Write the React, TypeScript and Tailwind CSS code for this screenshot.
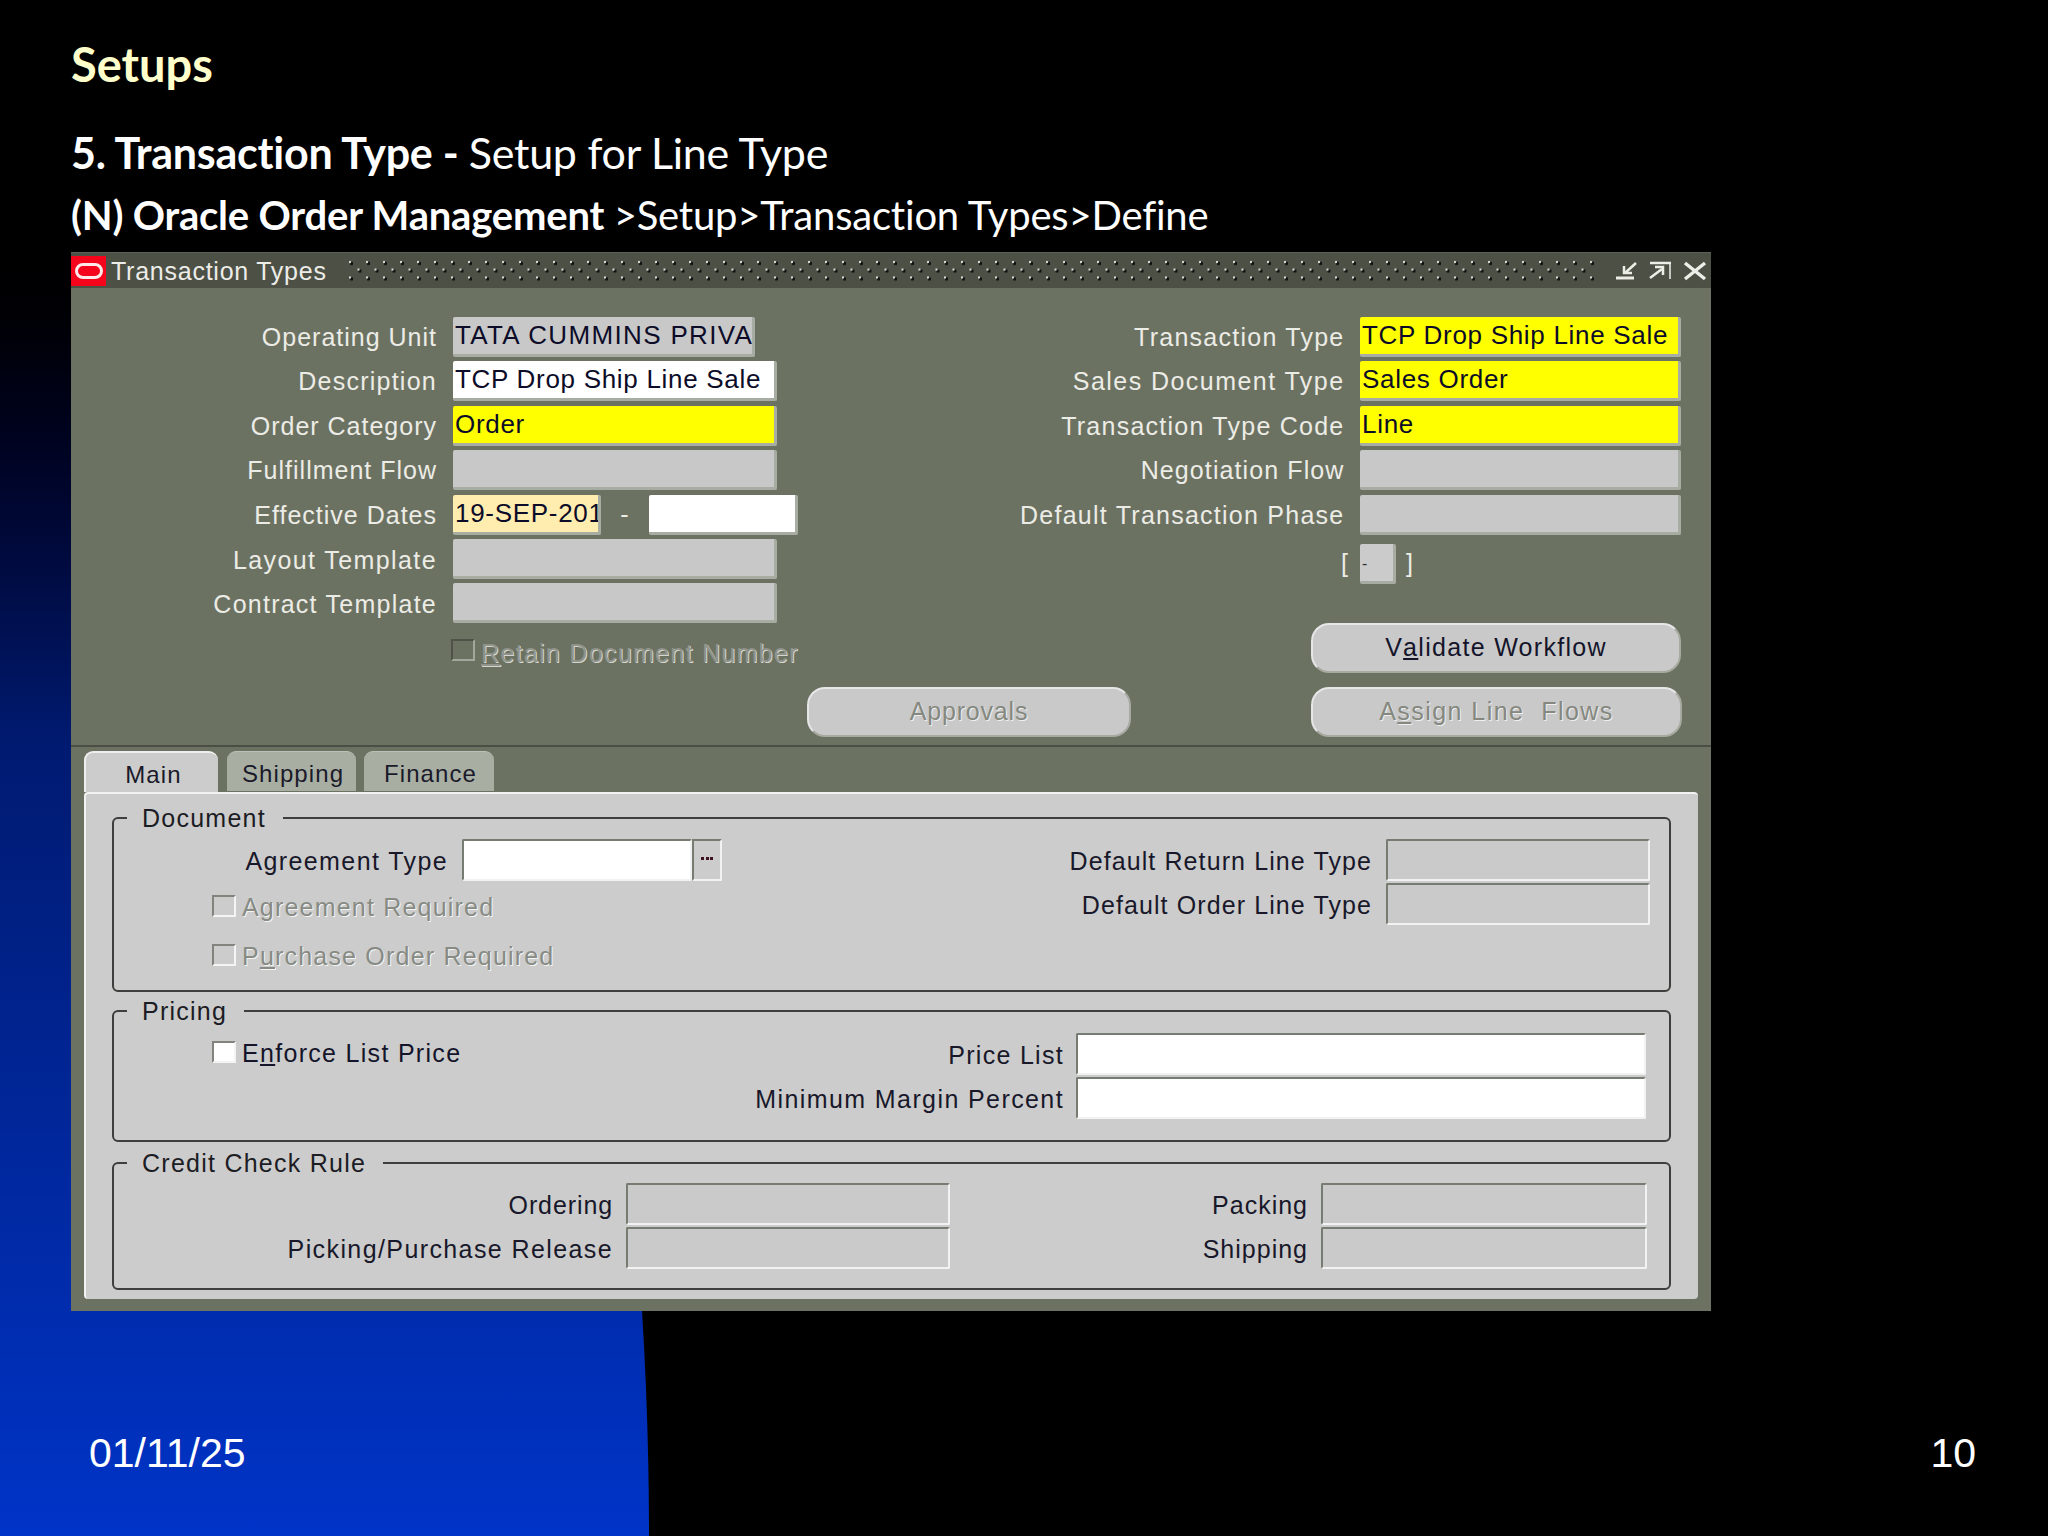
import React from "react";

const sans = "font-['Liberation_Sans',Arial,sans-serif]";

function Field({ w, tone = "gray", children }: { w: number; tone?: "gray" | "white" | "yellow" | "date"; children?: React.ReactNode }) {
  const bg = { gray: "bg-[#c8c8c8]", white: "bg-white", yellow: "bg-[#ffff00]", date: "bg-[#ffedb0]" }[tone];
  return (
    <div style={{ width: w }} className={`h-[40px] shrink-0 ${bg} border-r-[3px] border-b-[3px] border-[#a8ada3] rounded-[2px] pl-[2px] text-[26px] leading-[36px] tracking-[0.7px] text-[#0c0c28] overflow-hidden whitespace-nowrap`}>
      {children}
    </div>
  );
}

function Sunken({ w, tone = "gray" }: { w: number; tone?: "gray" | "white" }) {
  return (
    <div style={{ width: w }} className={`h-[42px] shrink-0 ${tone === "white" ? "bg-white" : "bg-[#cacaca]"} border-t-2 border-l-2 border-[#777c72] border-r-2 border-b-2 border-r-[#f2f2f2] border-b-[#f2f2f2] rounded-[2px]`} />
  );
}

function Row({ label, children, labelW = 366, gap = 16, labelClass = "tracking-[1.25px] leading-[41px]" }: { label: string; children: React.ReactNode; labelW?: number; gap?: number; labelClass?: string }) {
  return (
    <div className="flex items-start h-[44.4px]" style={{ gap }}>
      <div style={{ width: labelW }} className={`shrink-0 text-right text-[25px] text-[#ecece6] whitespace-nowrap ${labelClass}`}>{label}</div>
      {children}
    </div>
  );
}

function Pill({ w, disabled, tracking, children }: { w: number; disabled?: boolean; tracking: number; children: React.ReactNode }) {
  return (
    <div style={{ width: w, letterSpacing: tracking }} className={`h-[50px] rounded-[18px] bg-[#c9c9c9] border-t-2 border-l-2 border-[#e6e6e6] border-r-2 border-b-2 border-r-[#a6aaa0] border-b-[#a6aaa0] flex items-center justify-center text-[25px] ${disabled ? "text-[#85887f] [text-shadow:1px_1px_0_#eeeeee]" : "text-[#14142a]"}`}>
      {children}
    </div>
  );
}

function Check({ white, dark }: { white?: boolean; dark?: boolean }) {
  return <div className={`w-[24px] h-[22px] shrink-0 -mt-[5px] border-t-2 border-l-2 ${dark ? "border-[#4e5249] border-r-[#a3a89d] border-b-[#a3a89d]" : "border-[#80847c] border-r-[#f4f4f4] border-b-[#f4f4f4]"} ${white ? "bg-white" : "bg-transparent"} border-r-2 border-b-2`} />;
}

function Group({ legend, children, h, className = "" }: { legend: string; children: React.ReactNode; h: number; className?: string }) {
  return (
    <div style={{ height: h }} className={`relative border-2 border-[#3d3f3c] rounded-[6px] ${className}`}>
      <div className="absolute left-[13px] top-[-17px] h-[32px] pl-[15px] pr-[17px] bg-[#cccccc] text-[25px] leading-[32px] tracking-[1.25px] text-[#1c1c24]">{legend}</div>
      {children}
    </div>
  );
}

function Tab({ w, active, ml = 0, children }: { w: number; active?: boolean; ml?: number; children: React.ReactNode }) {
  return (
    <div style={{ width: w, marginLeft: ml }} className={`rounded-t-[9px] flex items-center justify-center pt-[4px] pl-[3px] text-[24px] tracking-[1.1px] text-[#1a1a2a] ${active ? "h-[41px] bg-[#cccccc] border-t-2 border-l-2 border-[#eeeeee]" : "h-[40px] bg-[#a9aea3] border-t border-[#bcc0b6]"}`}>
      {children}
    </div>
  );
}

function DotBar() {
  return (
    <svg className="flex-1 h-[24px] ml-[21px] mr-[14px]" preserveAspectRatio="none">
      <defs>
        <pattern id="dots" x="0" y="0" width="17" height="15.5" patternUnits="userSpaceOnUse">
          <rect x="2" y="3" width="3" height="3" fill="#111" />
          <rect x="1" y="2" width="2" height="2" fill="#e0e0d8" />
          <rect x="10.5" y="10.5" width="3" height="3" fill="#111" />
          <rect x="9.5" y="9.5" width="2" height="2" fill="#e0e0d8" />
        </pattern>
      </defs>
      <rect width="100%" height="100%" fill="url(#dots)" />
    </svg>
  );
}

const lower = "text-right text-[25px] leading-[44px] text-[#18182a] whitespace-nowrap";

export default function App() {
  return (
    <div className="relative w-[2048px] h-[1536px] bg-black overflow-hidden">
      <div className="absolute left-0 top-0 w-[649px] h-[1536px] rounded-tr-[649px_1536px] bg-gradient-to-b from-black from-[13%] via-[#001a70] via-[48%] to-[#0034c8]" />

      <div className="relative pl-[71px]">
        <div className="h-[131px] pt-[36px] font-['Lato',sans-serif]">
          <div className="text-[#ffffcc] font-bold text-[47px] leading-[56px]">Setups</div>
        </div>
        <div className="h-[62px] font-['Lato',sans-serif] text-white text-[43px] leading-[44px] tracking-[-0.25px]">
          <b>5. Transaction Type - </b>Setup for Line Type
        </div>
        <div className="h-[59px] font-['Lato',sans-serif] text-white text-[40px] leading-[44px] tracking-[-0.2px]">
          <b>(N) Oracle Order Management </b>&gt;Setup&gt;Transaction Types&gt;Define
        </div>

        <div className={`w-[1640px] h-[1059px] bg-[#6c7262] ${sans}`}>
          <div className="h-[36px] flex items-center bg-[#4c5045] border-t border-[#5c6055]">
            <div className="w-[35px] h-[30px] bg-[#f4051c] flex items-center justify-center">
              <div className="w-[28px] h-[16px] rounded-full border-[3px] border-[#ffe8e8]" />
            </div>
            <div className="ml-[5px] text-[25px] leading-[34px] tracking-[0.75px] text-[#ecece8] whitespace-nowrap">Transaction Types</div>
            <DotBar />
            <svg width="101" height="35" viewBox="0 0 101 35" className="shrink-0" fill="none" stroke="#eeeee8">
              <path d="M6 25h18" strokeWidth="3" />
              <path d="M26 10 15 20" strokeWidth="2.5" />
              <path d="M14 13v7h8" strokeWidth="2.5" />
              <path d="M40 10h21" strokeWidth="2.5" />
              <path d="M60 10v16" strokeWidth="1.5" />
              <path d="M40 25 52 16" strokeWidth="2.5" />
              <path d="M45 14h8v8" strokeWidth="2.5" />
              <path d="M75 10l20 16M95 10 75 26" strokeWidth="3.5" />
            </svg>
          </div>

          <div className="h-[459px] pt-[29px] border-b-2 border-[#4a4f45]">
            <div className="flex">
              <div className="w-[800px] shrink-0">
                <Row label="Operating Unit" labelClass="tracking-[1px] leading-[41px]"><Field w={302}><span className="tracking-[1.35px]">TATA CUMMINS PRIVA</span></Field></Row>
                <Row label="Description"><Field w={324} tone="white">TCP Drop Ship Line Sale</Field></Row>
                <Row label="Order Category" labelClass="tracking-[1px] leading-[41px]"><Field w={324} tone="yellow">Order</Field></Row>
                <Row label="Fulfillment Flow" labelClass="tracking-[1px] leading-[41px]"><Field w={324} /></Row>
                <Row label="Effective Dates" labelClass="tracking-[1px] leading-[41px]">
                  <Field w={148} tone="date">19-SEP-201</Field>
                  <div className="w-[31px] text-center -ml-[16px] pl-[16px] text-[25px] leading-[38px] text-[#ecece6]">-</div>
                  <div className="ml-[-15px] pl-[16px]"><Field w={149} tone="white" /></div>
                </Row>
                <Row label="Layout Template" labelClass="tracking-[1.4px] leading-[43px]"><Field w={324} /></Row>
                <Row label="Contract Template" labelClass="tracking-[1.25px] leading-[43px]"><Field w={324} /></Row>
                <div className="flex items-center gap-[6px] mt-[13px] ml-[380px] h-[24px]">
                  <Check dark />
                  <span className="mt-[2px] text-[25px] tracking-[1.3px] text-[#8f938a] [text-shadow:1px_1px_0_#d6d6d0] whitespace-nowrap"><u>R</u>etain Document Number</span>
                </div>
              </div>
              <div className="flex-1 min-w-0">
                <Row label="Transaction Type" labelW={473.5} gap={15.5}><Field w={321} tone="yellow">TCP Drop Ship Line Sale</Field></Row>
                <Row label="Sales Document Type" labelW={473.5} gap={15.5} labelClass="tracking-[1.45px] leading-[41px]"><Field w={321} tone="yellow">Sales Order</Field></Row>
                <Row label="Transaction Type Code" labelW={473.5} gap={15.5}><Field w={321} tone="yellow">Line</Field></Row>
                <Row label="Negotiation Flow" labelW={473.5} gap={15.5} labelClass="tracking-[1.1px] leading-[41px]"><Field w={321} /></Row>
                <Row label="Default Transaction Phase" labelW={473.5} gap={15.5}><Field w={321} /></Row>
                <div className="flex items-center h-[40px] ml-[470px] mt-[5px] text-[#ecece6] text-[25px]">
                  <span className="w-[19px]">[</span>
                  <div className="w-[36px] h-[40px] bg-[#cbcbcb] border-r-[3px] border-b-[3px] border-[#a8ada3] rounded-[2px] pl-[2px] text-[16px] leading-[40px] text-[#333]">-</div>
                  <span className="ml-[10px]">]</span>
                </div>
                <div className="mt-[39px] ml-[440px]"><Pill w={370} tracking={1.3}>V<u>a</u>lidate Workflow</Pill></div>
              </div>
            </div>
            <div className="flex mt-[14px]">
              <div className="ml-[736px]"><Pill w={324} disabled tracking={0.8}>Approvals</Pill></div>
              <div className="ml-[180px]"><Pill w={371} disabled tracking={1.45}>A<u>s</u>sign Line&nbsp; Flows</Pill></div>
            </div>
          </div>

          <div className="flex pl-[13px] pt-[4px]">
            <Tab w={134} active>Main</Tab>
            <Tab w={129} ml={9}>Shipping</Tab>
            <Tab w={130} ml={8}>Finance</Tab>
          </div>
          <div className="ml-[13px] w-[1614px] h-[507px] bg-[#cccccc] border-t-2 border-l-2 border-[#f2f2f2] rounded-[4px] pt-[23px] pl-[26px] pr-[27px]">
            <Group legend="Document" h={175} className="flex justify-between pt-[20px] pr-[19px]">
              <div>
                <div className="flex items-start">
                  <div className={`w-[334px] tracking-[1.4px] ${lower}`}>Agreement Type</div>
                  <div className="ml-[14px] flex"><Sunken w={230} tone="white" /><div className="w-[30px] h-[42px] border-2 border-[#777c72] border-r-[#f2f2f2] border-b-[#f2f2f2] bg-[#cccccc] flex items-center justify-center gap-[1.5px] pb-[3px]"><i className="w-[3px] h-[3px] bg-[#401020]" /><i className="w-[3px] h-[3px] bg-[#401020]" /><i className="w-[3px] h-[3px] bg-[#401020]" /></div></div>
                </div>
                <div className="flex items-center gap-[6px] ml-[98px] mt-[13px] h-[24px]"><Check /><span className="text-[25px] tracking-[1.2px] text-[#878b84] [text-shadow:1px_1px_0_#f4f4f4]">Agreement Required</span></div>
                <div className="flex items-center gap-[6px] ml-[98px] mt-[25px] h-[24px]"><Check /><span className="text-[25px] tracking-[1.2px] text-[#878b84] [text-shadow:1px_1px_0_#f4f4f4]">P<u>u</u>rchase Order Required</span></div>
              </div>
              <div className="flex flex-col">
                <div className="flex justify-end"><div className={`mr-[14px] tracking-[1.1px] ${lower}`}>Default Return Line Type</div><Sunken w={264} /></div>
                <div className="flex justify-end"><div className={`mr-[14px] tracking-[1.1px] ${lower}`}>Default Order Line Type</div><Sunken w={264} /></div>
              </div>
            </Group>

            <Group legend="Pricing" h={132} className="mt-[18px] flex justify-between pt-[21px] pr-[23px]">
              <div className="flex items-center gap-[6px] ml-[98px] mt-[9px] h-[24px]"><Check white /><span className="text-[25px] tracking-[1.3px] text-[#14142a]">E<u>n</u>force List Price</span></div>
              <div className="flex flex-col">
                <div className="flex justify-end"><div className={`mr-[12px] tracking-[1.3px] ${lower}`}>Price List</div><Sunken w={570} tone="white" /></div>
                <div className="flex justify-end"><div className={`mr-[12px] tracking-[1.4px] ${lower}`}>Minimum Margin Percent</div><Sunken w={570} tone="white" /></div>
              </div>
            </Group>

            <Group legend="Credit Check Rule" h={128} className="mt-[20px] pt-[19px]">
              {[["Ordering", "Packing", "tracking-[0.9px]"], ["Picking/Purchase Release", "Shipping", "tracking-[1.4px]"]].map(([a, b, t]) => (
                <div key={a} className="flex h-[44.4px]">
                  <div className={`w-[499px] leading-[44px] ${t} ${lower}`}>{a}</div>
                  <div className="ml-[13px]"><Sunken w={324} /></div>
                  <div className="w-[358px] text-right text-[25px] leading-[44px] tracking-[1px] text-[#18182a]">{b}</div>
                  <div className="ml-[13px]"><Sunken w={326} /></div>
                </div>
              ))}
            </Group>
          </div>
        </div>
      </div>

      <div className={`relative flex justify-between pl-[89px] pr-[72px] mt-[119px] text-white text-[41px] leading-[46px] ${sans}`}>
        <span>01/11/25</span>
        <span>10</span>
      </div>
    </div>
  );
}
